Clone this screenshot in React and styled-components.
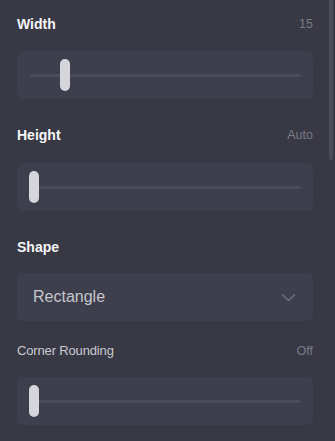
import React from "react";
import styled, { createGlobalStyle } from "styled-components";

const GlobalStyle = createGlobalStyle`
  html, body {
    margin: 0;
    padding: 0;
    background: #383945;
  }
  body {
    font-family: "Liberation Sans", Arial, sans-serif;
    overflow: hidden;
  }
`;

const Panel = styled.div`
  position: relative;
  width: 335px;
  height: 441px;
  box-sizing: border-box;
  padding: 16px 22px 0 17px;
  background: #383945;
  overflow: hidden;
`;

const ScrollThumb = styled.div`
  position: absolute;
  top: 0;
  right: 2px;
  width: 4px;
  height: 160px;
  background: #4c4d5a;
  border-radius: 0 0 2px 2px;
`;

const Section = styled.div`
  display: flex;
  flex-direction: column;
  margin-top: ${(p) => p.$gap}px;
`;

const Header = styled.div`
  display: flex;
  align-items: center;
  justify-content: space-between;
  height: 16px;
`;

const Label = styled.span`
  font-size: ${(p) => (p.$strong ? 14 : 13)}px;
  font-weight: ${(p) => (p.$strong ? 700 : 400)};
  letter-spacing: ${(p) => (p.$strong ? 0 : -0.15)}px;
  color: ${(p) => (p.$strong ? "#f6f6f8" : "#cacad1")};
  line-height: 16px;
`;

const Value = styled.span`
  font-size: 12.5px;
  color: #7a7b86;
  line-height: 16px;
`;

const Card = styled.div`
  margin-top: ${(p) => p.$gap}px;
  height: 48px;
  box-sizing: border-box;
  border-radius: 6px;
  background: #3e3f4c;
  display: flex;
  align-items: center;
  padding: 0 12px;
`;

const Track = styled.div`
  position: relative;
  flex: 1;
  height: 3px;
  border-radius: 2px;
  background: #4b4c59;
`;

const Thumb = styled.div`
  position: absolute;
  top: 50%;
  width: 10px;
  height: 32px;
  margin-top: -16px;
  border-radius: 5px;
  background: #d5d5db;
`;

const Select = styled(Card)`
  justify-content: space-between;
  padding: 0 17px 0 16px;
  cursor: pointer;
`;

const SelectText = styled.span`
  font-size: 16px;
  color: #c6c6cd;
`;

const Chevron = () => (
  <svg width="15" height="9" viewBox="0 0 15 9" fill="none">
    <path d="M1 1.2 L7.5 7.5 L14 1.2" stroke="#70717d" strokeWidth="1.3" />
  </svg>
);

const Slider = ({ pct, gap }) => (
  <Card $gap={gap}>
    <Track>
      <Thumb style={{ left: `calc(${pct} * (100% - 10px))` }} />
    </Track>
  </Card>
);

const App = () => {
  return (
    <>
      <GlobalStyle />
      <Panel>
        <Section $gap={0}>
          <Header>
            <Label $strong>Width</Label>
            <Value>15</Value>
          </Header>
          <Slider pct={0.118} gap={19} />
        </Section>
        <Section $gap={28}>
          <Header>
            <Label $strong>Height</Label>
            <Value>Auto</Value>
          </Header>
          <Slider pct={0} gap={20} />
        </Section>
        <Section $gap={28}>
          <Header>
            <Label $strong>Shape</Label>
          </Header>
          <Select $gap={18}>
            <SelectText>Rectangle</SelectText>
            <Chevron />
          </Select>
        </Section>
        <Section $gap={22}>
          <Header>
            <Label>Corner Rounding</Label>
            <Value>Off</Value>
          </Header>
          <Slider pct={0} gap={18} />
        </Section>
        <ScrollThumb />
      </Panel>
    </>
  );
};

export default App;
